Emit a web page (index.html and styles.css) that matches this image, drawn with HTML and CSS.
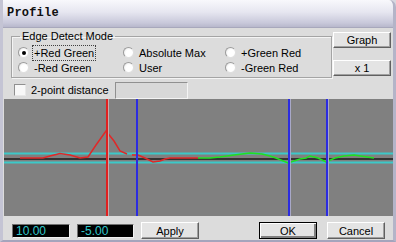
FILE: index.html
```html
<!DOCTYPE html>
<html lang="en">
<head>
  <meta charset="UTF-8">
  <title>Profile</title>
  <link rel="stylesheet" href="styles.css">
</head>
<body>
  <div class="window">
    <div class="titlebar">Profile</div>

    <div class="content">
      <div class="top-row">
        <fieldset class="mode-group">
          <legend>Edge Detect Mode</legend>
          <div class="radio-grid">
            <label class="radio"><span class="dot checked"></span><span class="focus">+Red Green</span></label>
            <label class="radio"><span class="dot"></span>Absolute Max</label>
            <label class="radio"><span class="dot"></span>+Green Red</label>
            <label class="radio"><span class="dot"></span>-Red Green</label>
            <label class="radio"><span class="dot"></span>User</label>
            <label class="radio"><span class="dot"></span>-Green Red</label>
          </div>
        </fieldset>
        <div class="side-buttons">
          <button class="btn">Graph</button>
          <button class="btn">x 1</button>
        </div>
      </div>

      <div class="check-row">
        <span class="checkbox"></span>
        <span class="check-label">2-point distance</span>
        <span class="textbox"></span>
      </div>
    </div>

    <div class="graph">
      <svg width="389" height="117" viewBox="0 0 389 117">
        <line x1="0" y1="54.5" x2="389" y2="54.5" stroke="#3cc8c8" stroke-width="2"/>
        <line x1="0" y1="60" x2="389" y2="60" stroke="#333333" stroke-width="2"/>
        <line x1="0" y1="63.5" x2="389" y2="63.5" stroke="#3cc8c8" stroke-width="2"/>

        <polyline fill="none" stroke="#e02828" stroke-width="1.5"
          points="16,59 39,59 46,57 56,54.5 66,56 76,59 84,58 92,46 102,32 110,42 116,52 123,55"/>
        <polyline fill="none" stroke="#e02828" stroke-width="1.5"
          points="128,56 134,56 141,59 149,63 156,62 161,60 166,59 194,59"/>
        <polyline fill="none" stroke="#20e020" stroke-width="1.5"
          points="194,59 206,59 216,58 230,56 246,54 258,55 266,57 272,59 284,64 296,60 302,59 306,57 310,58 314,59 322,63 331,59 340,57 350,56 370,59"/>

        <line x1="103" y1="0" x2="103" y2="117" stroke="#e02020" stroke-width="2"/>
        <line x1="104.5" y1="0" x2="104.5" y2="117" stroke="#c8a8a8" stroke-width="1"/>
        <line x1="133" y1="0" x2="133" y2="117" stroke="#2c2ce0" stroke-width="2"/>
        <line x1="285" y1="0" x2="285" y2="117" stroke="#2c2ce0" stroke-width="2"/>
        <line x1="286.5" y1="0" x2="286.5" y2="117" stroke="#a8a8c8" stroke-width="1"/>
        <line x1="323" y1="0" x2="323" y2="117" stroke="#2c2ce0" stroke-width="2"/>
        <line x1="324.5" y1="0" x2="324.5" y2="117" stroke="#a8a8c8" stroke-width="1"/>
      </svg>
    </div>

    <div class="bottom-row">
      <span class="value">10.00</span>
      <span class="value">-5.00</span>
      <button class="btn apply">Apply</button>
      <span class="spacer"></span>
      <button class="btn default">OK</button>
      <button class="btn cancel">Cancel</button>
    </div>
  </div>
</body>
</html>
```

FILE: styles.css
```css
body {
  margin: 0;
  padding: 0;
  font-family: "Liberation Sans", Arial, sans-serif;
  font-size: 11px;
  color: #000;
  background: #d8d8e0;
}

.window {
  width: 396px;
  height: 242px;
  box-sizing: border-box;
  background: #dcdcdc;
  border-left: 3px solid #c4c4d4;
  border-right: 3px solid #b4b4c8;
  border-bottom: 2px solid #a4a4bc;
  border-top-right-radius: 7px;
  overflow: hidden;
}

.titlebar {
  height: 28px;
  box-sizing: border-box;
  padding: 6px 0 0 4px;
  font-family: "Liberation Mono", "Courier New", monospace;
  font-weight: bold;
  font-size: 12px;
  letter-spacing: 0.2px;
  color: #101010;
  background: linear-gradient(#f8f8fc 0%, #e6e6f0 45%, #c8c8da 85%, #b8b8cc 100%);
  border-bottom: 1px solid #a8a8bc;
}

.content {
  padding: 2px 2px 0 8px;
}

.top-row {
  display: flex;
  align-items: flex-start;
}

.mode-group {
  width: 322px;
  height: 48px;
  box-sizing: border-box;
  margin: 0;
  padding: 4px 0 0 4px;
  border: 1px solid #a4a4a4;
  box-shadow: inset 1px 1px 0 #f4f4f4, 1px 1px 0 #f4f4f4;
}

.mode-group legend {
  padding: 0 2px;
  margin-left: 4px;
  font-size: 11px;
  line-height: 12px;
}

.radio-grid {
  display: grid;
  grid-template-columns: 105px 102px 90px;
  row-gap: 2px;
  margin-top: 0;
}

.radio {
  display: flex;
  align-items: center;
  height: 13px;
}

.dot {
  width: 11px;
  height: 11px;
  margin: 0 5px 0 2px;
  border-radius: 50%;
  background: radial-gradient(circle at 60% 60%, #ffffff 45%, #e0e0e0 100%);
  border: 1px solid #9c9c9c;
  border-right-color: #e0e0e0;
  border-bottom-color: #e0e0e0;
  box-sizing: border-box;
  position: relative;
}

.dot.checked::after {
  content: "";
  position: absolute;
  left: 2.5px;
  top: 2.5px;
  width: 4px;
  height: 4px;
  border-radius: 50%;
  background: #000;
}

.focus {
  outline: 1px dotted #404040;
  outline-offset: 1px;
}

.side-buttons {
  display: flex;
  flex-direction: column;
  gap: 12px;
  margin: 2px 0 0 1px;
}

.btn {
  font-family: "Liberation Sans", Arial, sans-serif;
  font-size: 11px;
  width: 58px;
  height: 16px;
  padding: 0;
  background: #e4e4e4;
  border: 1px solid;
  border-color: #ffffff #606060 #606060 #ffffff;
  box-shadow: inset -1px -1px 0 #a0a0a0;
  color: #000;
}

.check-row {
  display: flex;
  align-items: center;
  height: 18px;
  margin-top: 3px;
}

.checkbox {
  width: 12px;
  height: 12px;
  box-sizing: border-box;
  margin-left: 3px;
  background: #f8f8f8;
  border: 1px solid #909090;
  border-right-color: #e8e8e8;
  border-bottom-color: #e8e8e8;
}

.check-label {
  margin-left: 5px;
  width: 84px;
}

.textbox {
  width: 73px;
  height: 17px;
  box-sizing: border-box;
  background: #d8d8d8;
  border: 1px solid #909090;
  border-right-color: #f4f4f4;
  border-bottom-color: #f4f4f4;
}

.graph {
  height: 117px;
  margin-left: 1px;
  background: #808080;
}

.graph svg {
  display: block;
}

.bottom-row {
  display: flex;
  align-items: center;
  gap: 7px;
  padding: 6px 0 0 9px;
}

.value {
  width: 58px;
  height: 14px;
  box-sizing: border-box;
  padding: 0 3px;
  background: #000;
  color: #30c8cc;
  font-size: 12px;
  line-height: 13px;
  border: 1px solid #707070;
  border-right-color: #f0f0f0;
  border-bottom-color: #f0f0f0;
}

.value + .value {
  width: 57px;
}

.spacer {
  width: 46px;
}

.default {
  border: 1px solid #000;
  box-shadow: inset 1px 1px 0 #ffffff, inset -2px -2px 0 #808080;
}

.cancel {
  margin-left: 3px;
}

.bottom-row .btn {
  height: 17px;
}
```
